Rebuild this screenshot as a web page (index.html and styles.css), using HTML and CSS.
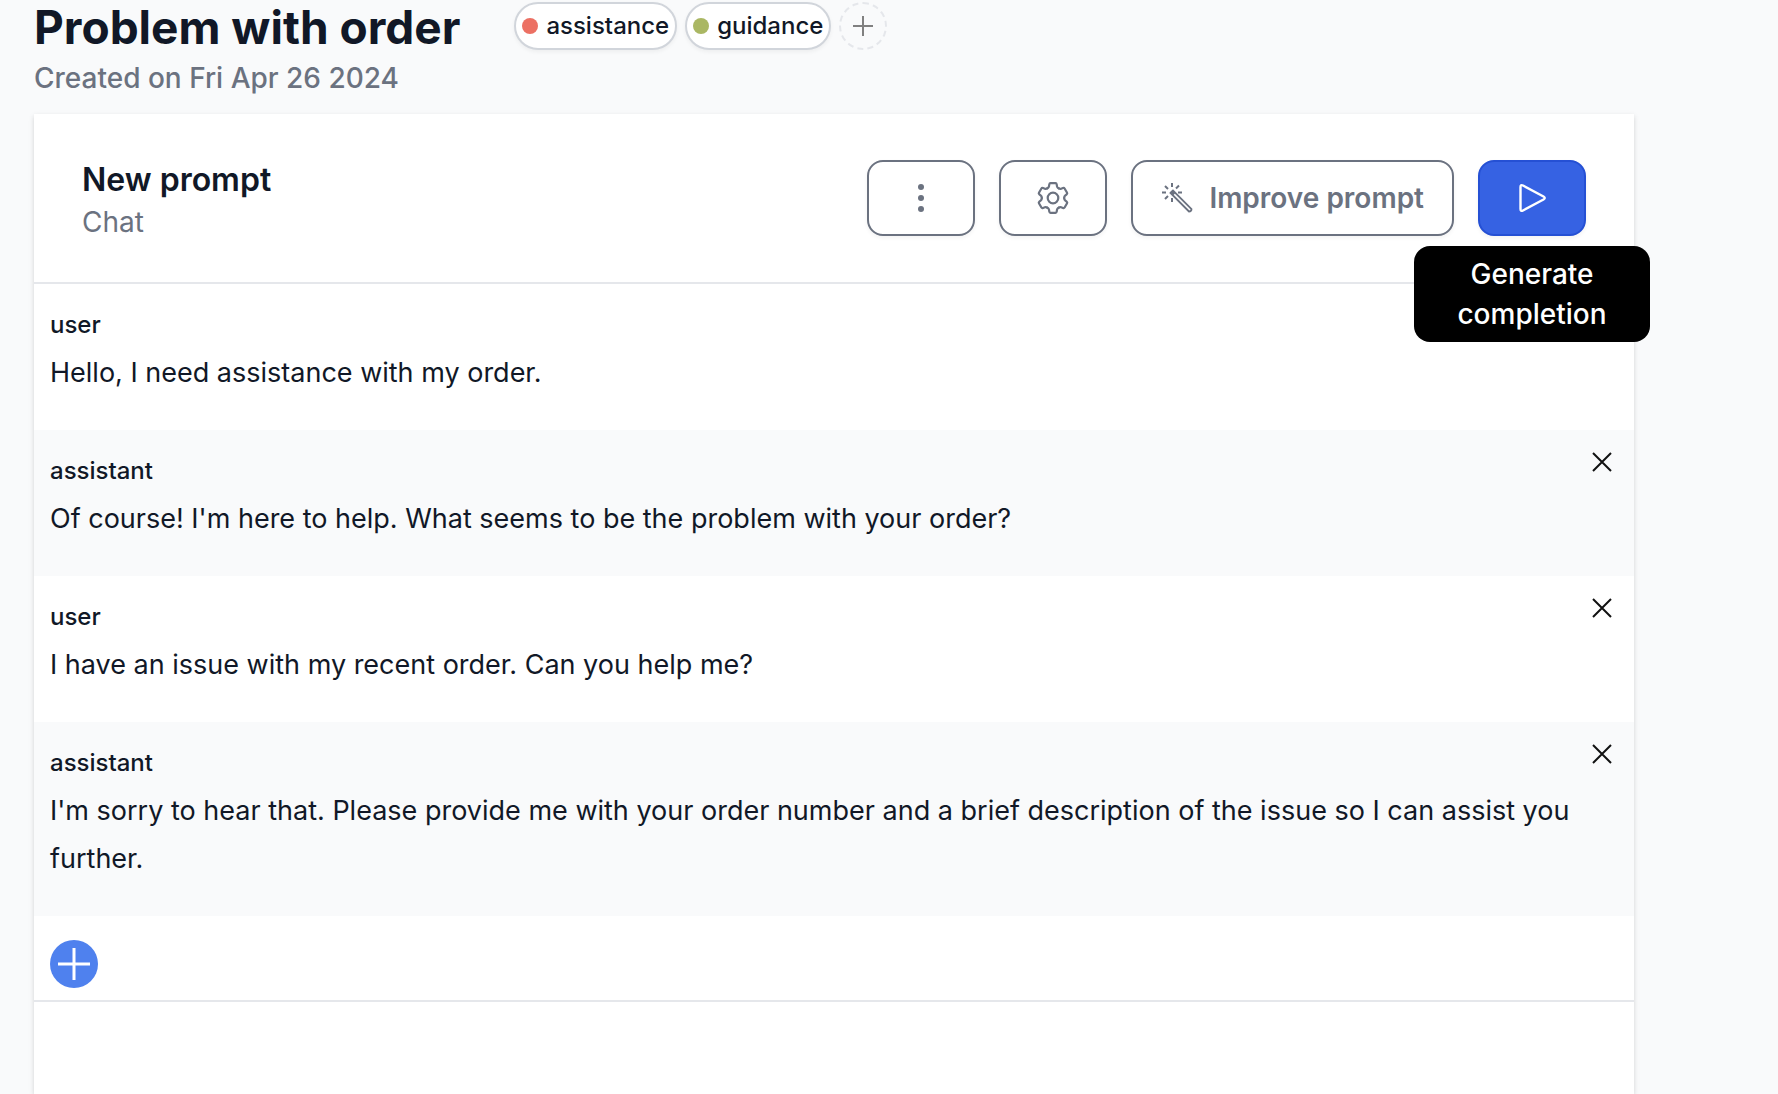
FILE: index.html
```html
<!DOCTYPE html>
<html lang="en">
<head>
<meta charset="utf-8">
<meta name="viewport" content="width=device-width, initial-scale=1">
<title>Problem with order</title>
<link rel="stylesheet" href="styles.css">
</head>
<body>
<main class="page">
  <header class="page-header">
    <div class="title-row">
      <h1 class="title">Problem with order</h1>
      <ul class="tags">
        <li class="tag"><span class="dot dot-red"></span>assistance</li>
        <li class="tag"><span class="dot dot-green"></span>guidance</li>
        <li class="tag-slot">
          <button class="tag-add" type="button" aria-label="Add tag">
            <svg class="icon-tag-add" viewBox="0 0 20 20" aria-hidden="true"><path d="M10 0V20M0 10H20" fill="none" stroke="currentColor" stroke-width="2"/></svg>
          </button>
        </li>
      </ul>
    </div>
    <p class="created">Created on Fri Apr 26 2024</p>
  </header>

  <section class="card">
    <header class="card-header">
      <div class="card-heading">
        <h2 class="card-title">New prompt</h2>
        <p class="card-type">Chat</p>
      </div>
      <div class="actions">
        <button class="btn" type="button" aria-label="More options">
          <svg class="icon" viewBox="0 0 32 32" fill="currentColor" aria-hidden="true"><circle cx="16" cy="5" r="3"/><circle cx="16" cy="16" r="3"/><circle cx="16" cy="27" r="3"/></svg>
        </button>
        <button class="btn" type="button" aria-label="Settings">
          <svg class="icon" viewBox="-16 -16 32 32" fill="none" stroke="currentColor" stroke-width="2.2" stroke-linecap="round" stroke-linejoin="round" aria-hidden="true">
            <circle r="5.3"/>
            <path id="tooth" d="M-5.600 -9.700Q-4.200 -10.500 -4 -11.700L-3.700 -13.600Q-3.500 -14.800 -2.500 -14.800H2.500Q3.500 -14.800 3.700 -13.600L4 -11.700Q4.200 -10.500 5.600 -9.700"/>
            <use href="#tooth" transform="rotate(60)"/>
            <use href="#tooth" transform="rotate(120)"/>
            <use href="#tooth" transform="rotate(180)"/>
            <use href="#tooth" transform="rotate(240)"/>
            <use href="#tooth" transform="rotate(300)"/>
          </svg>
        </button>
        <button class="btn" type="button">
          <svg class="icon" viewBox="0 0 32 32" fill="none" stroke="currentColor" aria-hidden="true"><path d="M11 1v4M11 16v4M1 10.500h4M17 10.500h4M4 4l3 3M15 6.500l3-3M4 17l3-3" stroke-width="2"/><path d="M9.500 11l2.500-2.500L30.500 27q0 2.500-2.500 2.500z" stroke-width="1.800"/><path d="M9 10.500l2.500-2.500 3 3-2.500 2.500z" fill="currentColor" stroke="none"/></svg>
          Improve prompt
        </button>
        <div class="tip-anchor">
          <button class="btn btn-primary" type="button" aria-label="Generate" aria-describedby="run-tip">
            <svg class="icon" viewBox="0 0 32 32" fill="none" stroke="currentColor" stroke-width="2.400" stroke-linejoin="round" aria-hidden="true"><path d="M4.500 5v22q0 2.800 2.500 1.500l20.500-11q2.500-1.500 0-3L7 3.500q-2.500-1.300-2.500 1.500z"/></svg>
          </button>
          <div class="tooltip" id="run-tip" role="tooltip">Generate completion</div>
        </div>
      </div>
    </header>

    <div class="messages">
      <article class="message">
        <h3 class="role">user</h3>
        <p class="text">Hello, I need assistance with my order.</p>
      </article>
      <article class="message">
        <h3 class="role">assistant</h3>
        <p class="text">Of course! I'm here to help. What seems to be the problem with your order?</p>
        <button class="remove" type="button" aria-label="Remove message"><svg class="icon-x" viewBox="0 0 20 20" aria-hidden="true"><path d="M1 1L19 19M19 1L1 19" fill="none" stroke="currentColor" stroke-width="2"/></svg></button>
      </article>
      <article class="message">
        <h3 class="role">user</h3>
        <p class="text">I have an issue with my recent order. Can you help me?</p>
        <button class="remove" type="button" aria-label="Remove message"><svg class="icon-x" viewBox="0 0 20 20" aria-hidden="true"><path d="M1 1L19 19M19 1L1 19" fill="none" stroke="currentColor" stroke-width="2"/></svg></button>
      </article>
      <article class="message">
        <h3 class="role">assistant</h3>
        <p class="text">I'm sorry to hear that. Please provide me with your order number and a brief description of the issue so I can assist you further.</p>
        <button class="remove" type="button" aria-label="Remove message"><svg class="icon-x" viewBox="0 0 20 20" aria-hidden="true"><path d="M1 1L19 19M19 1L1 19" fill="none" stroke="currentColor" stroke-width="2"/></svg></button>
      </article>
    </div>

    <div class="card-footer">
      <button class="message-add" type="button" aria-label="Add message">
        <svg class="icon" viewBox="0 0 32 32" aria-hidden="true"><path d="M16 0V32M0 16H32" fill="none" stroke="currentColor" stroke-width="3"/></svg>
      </button>
    </div>
  </section>
</main>
</body>
</html>
```
FILE: styles.css
```css
*, *::before, *::after { box-sizing: border-box; }

body {
  margin: 0;
  background: #f9fafb;
  color: #111827;
  font-family: Inter, "Liberation Sans", sans-serif;
  font-size: 28px;
  line-height: 40px;
}

h1, h2, h3, p, ul { margin: 0; padding: 0; }

button { font: inherit; cursor: pointer; }

svg { display: block; flex: none; }

.page {
  display: flex;
  flex-direction: column;
  min-height: 100vh;
  padding: 0 144px 0 34px;
}

.page-header { padding-bottom: 16px; }

.title-row {
  display: flex;
  align-items: flex-start;
  gap: 54px;
}

.title {
  font-size: 46px;
  font-weight: 700;
  line-height: 54px;
}

.tags {
  display: flex;
  align-items: center;
  gap: 8px;
  padding: 2px 0 8px;
  list-style: none;
}

.tag {
  display: flex;
  align-items: center;
  gap: 8px;
  height: 48px;
  padding: 0 6px;
  border: 2px solid #d1d5db;
  border-radius: 24px;
  background: #fff;
  box-shadow: 0 2px 4px rgba(0, 0, 0, 0.05);
  font-size: 24px;
  font-weight: 500;
}

.dot {
  width: 16px;
  height: 16px;
  border-radius: 50%;
}

.dot-red { background: #ec7063; }
.dot-green { background: #aab763; }

.tag-add {
  display: flex;
  align-items: center;
  justify-content: center;
  width: 48px;
  height: 48px;
  padding: 0;
  border: 2px dashed #e5e7eb;
  border-radius: 50%;
  background: transparent;
  color: #808080;
}

.icon-tag-add, .icon-x { width: 20px; height: 20px; }
.icon { width: 32px; height: 32px; }

.created {
  color: #6b7280;
  font-weight: 500;
}

.card {
  flex: 1;
  background: #fff;
  box-shadow: 0 2px 6px rgba(0, 0, 0, 0.1), 0 2px 4px rgba(0, 0, 0, 0.06);
}

.card-header {
  display: flex;
  align-items: flex-start;
  justify-content: space-between;
  padding: 46px 48px 38px;
  border-bottom: 2px solid #e5e7eb;
}

.card-title {
  font-size: 32px;
  font-weight: 600;
  line-height: 40px;
}

.card-type {
  color: #6b7280;
  line-height: 44px;
}

.actions { display: flex; gap: 24px; }

.btn {
  display: flex;
  align-items: center;
  justify-content: center;
  gap: 16px;
  min-width: 108px;
  height: 76px;
  padding: 0 28px;
  border: 2px solid #6b7280;
  border-radius: 16px;
  background: #fff;
  box-shadow: 0 2px 4px rgba(0, 0, 0, 0.05);
  color: #6b7280;
  font-weight: 600;
}

.btn-primary {
  border-color: #2550d4;
  background: #3662e3;
  color: #fff;
}

.tip-anchor { position: relative; }

.tooltip {
  position: absolute;
  top: calc(100% + 10px);
  left: 50%;
  z-index: 1;
  width: 236px;
  padding: 8px 24px;
  border-radius: 16px;
  background: #000;
  color: #fff;
  font-weight: 500;
  text-align: center;
  transform: translateX(-50%);
}

.message {
  position: relative;
  padding: 25px 16px 33px;
}

.message:nth-child(even) { background: #f9fafb; }

.role {
  margin-bottom: 8px;
  font-size: 24px;
  font-weight: 500;
  line-height: 32px;
}

.text {
  font-size: 27px;
  line-height: 48px;
}

.remove {
  position: absolute;
  top: 16px;
  right: 16px;
  display: flex;
  align-items: center;
  justify-content: center;
  width: 32px;
  height: 32px;
  padding: 0;
  border: 0;
  background: transparent;
  color: #111;
}

.card-footer {
  padding: 24px 16px 12px;
  border-bottom: 2px solid #e5e7eb;
}

.message-add {
  display: flex;
  align-items: center;
  justify-content: center;
  width: 48px;
  height: 48px;
  padding: 0;
  border: 0;
  border-radius: 50%;
  background: #4f81ee;
  color: #fff;
}
```
